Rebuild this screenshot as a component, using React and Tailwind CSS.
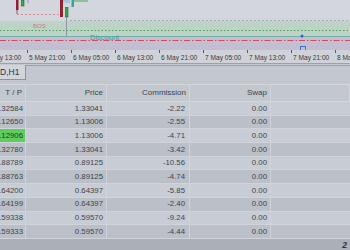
import React from "react";

const rows = [
  ["1.32584", "1.33041", "-2.22", "0.00"],
  ["1.12650", "1.13006", "-2.55", "0.00"],
  ["1.12906", "1.13006", "-4.71", "0.00", true],
  ["1.32780", "1.33041", "-3.42", "0.00"],
  ["0.88789", "0.89125", "-10.56", "0.00"],
  ["0.88763", "0.89125", "-4.74", "0.00"],
  ["0.64200", "0.64397", "-5.85", "0.00"],
  ["0.64199", "0.64397", "-2.40", "0.00"],
  ["0.59338", "0.59570", "-9.24", "0.00"],
  ["0.59333", "0.59570", "-4.44", "0.00"],
];

const times = ["5 May 13:00", "5 May 21:00", "6 May 05:00", "6 May 13:00", "6 May 21:00", "7 May 05:00", "7 May 13:00", "7 May 21:00", "8 May 05:00"];

const cols = "grid grid-cols-[26px_81px_83px_81px_1fr]";

function Chart() {
  return (
    <svg width="350" height="50" className="block">
      <rect x="0" y="0" width="350" height="21" fill="#d3d6dc" />
      <rect x="0" y="21" width="350" height="16" fill="#bdd3c5" />
      <rect x="0" y="37" width="350" height="13" fill="#c3bed0" />
      <line x1="70" y1="20.5" x2="350" y2="20.5" stroke="#a7aebb" strokeDasharray="2 2" />
      <line x1="0" y1="30.5" x2="350" y2="30.5" stroke="#4f9f5e" strokeDasharray="1.5 2" />
      <line x1="0" y1="36.5" x2="350" y2="36.5" stroke="#6fb2ae" />
      <line x1="0" y1="40.5" x2="350" y2="40.5" stroke="#d24a5c" strokeDasharray="6 2 1.5 2" />
      <line x1="17" y1="14.5" x2="60" y2="14.5" stroke="#dc8b98" strokeDasharray="2 2" />
      <text x="33" y="28" fontSize="6" fill="#cd7c7c" fontFamily="Liberation Sans, sans-serif">BOS</text>
      <text x="90" y="39.5" fontSize="7.5" fill="#3d9e9a" fontFamily="Liberation Sans, sans-serif">Discount</text>
      <line x1="17" y1="0" x2="17" y2="14" stroke="#6e6470" />
      <rect x="16" y="0" width="2.5" height="10" fill="#8c2232" />
      <rect x="21.5" y="0" width="2.5" height="6" fill="#32ad4e" stroke="#2a5e38" strokeWidth="0.6" />
      <line x1="28" y1="0" x2="28" y2="3" stroke="#8395d4" />
      <rect x="60" y="0" width="3" height="17" fill="#8c2232" />
      <rect x="63" y="0" width="7" height="3" fill="#a5c6da" />
      <line x1="66.5" y1="17" x2="66.5" y2="37" stroke="#8e97a6" />
      <rect x="65.5" y="7.5" width="2.5" height="9.5" fill="#32ad4e" stroke="#2a5e38" strokeWidth="0.6" />
      <rect x="71.5" y="0" width="2.5" height="7" fill="#3f9f98" />
      <rect x="74" y="0" width="14" height="2" fill="#86c397" />
      <circle cx="302" cy="36" r="1.5" fill="#2e63d8" />
      <rect x="300.5" y="46.5" width="5" height="4" fill="none" stroke="#3a6fe0" />
    </svg>
  );
}

export default function App() {
  return (
    <div className="w-[350px] h-[250px] overflow-hidden bg-[#c3c7ce] text-[#41454c] font-['Liberation_Sans',Arial,sans-serif]">
      <Chart />

      {/* time axis */}
      <div className="h-[14px] bg-[#cfd2d8] border-b border-[#9ca1a9] overflow-hidden flex ml-[-17px]">
        {times.map((t) => (
          <div key={t} className="w-[44px] shrink-0 flex items-start">
            <span className="w-px h-[3px] bg-[#555a62] shrink-0" />
            <span className="text-[6.6px] leading-none whitespace-nowrap ml-[1px] mt-[5px] text-[#363a41]">{t}</span>
          </div>
        ))}
      </div>

      {/* tab bar */}
      <div className="h-[20px] pt-[1px] flex">
        <div className="w-[26px] h-[15px] bg-[#d2d5db] border-r border-b border-[#8f949c] flex items-center overflow-hidden">
          <span className="text-[8.5px] leading-none whitespace-nowrap text-[#2f333a]">D,H1</span>
        </div>
        <div className="flex-1 h-[15px] border-t border-[#9da2aa]" />
      </div>

      {/* header */}
      <div className={`${cols} h-[18px] border-t border-b border-[#d2d5db] text-[8px]`}>
        {["T / P", "Price", "Commission", "Swap", ""].map((h, i) => (
          <div key={i} className="flex items-center justify-end pr-[3px] border-r border-[#d2d5db] whitespace-nowrap overflow-hidden">
            {h}
          </div>
        ))}
      </div>

      {/* rows */}
      {rows.map((r, i) => (
        <div
          key={i}
          className={`${cols} h-[13.7px] border-b border-[#d0d3d9] text-[7.8px] ${i % 2 ? "bg-[#bbbfc7]" : "bg-[#c8ccd4]"}`}
        >
          <div className={`flex items-center justify-end pr-[2px] border-r border-[#d0d3d9] overflow-hidden whitespace-nowrap ${r[4] ? "bg-[#5fcc5f] text-[#2c3a2c]" : ""}`}>
            {r[0]}
          </div>
          <div className="flex items-center justify-end pr-[3px] border-r border-[#d0d3d9] whitespace-nowrap">{r[1]}</div>
          <div className="flex items-center justify-end pr-[4px] border-r border-[#d0d3d9] whitespace-nowrap">{r[2]}</div>
          <div className="flex items-center justify-end pr-[3px] border-r border-[#d0d3d9] whitespace-nowrap">{r[3]}</div>
          <div />
        </div>
      ))}

      {/* footer */}
      <div className="h-[12px] bg-[#abafb7] flex items-center justify-end pr-[3px]">
        <span className="text-[8.5px] font-bold italic leading-none text-[#2e3238]">2</span>
      </div>
    </div>
  );
}
